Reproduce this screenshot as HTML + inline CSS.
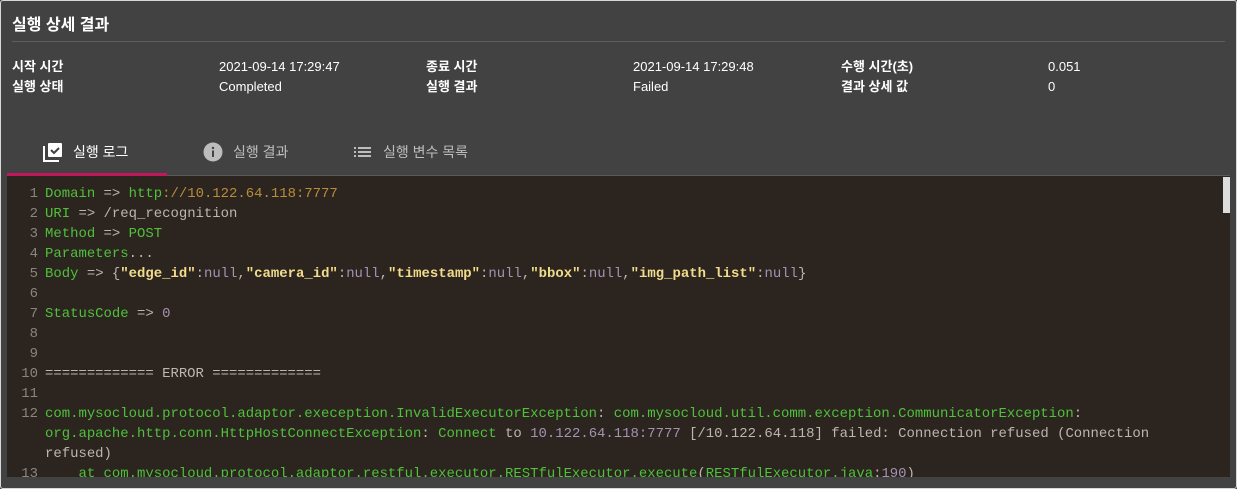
<!DOCTYPE html>
<html><head><meta charset="utf-8"><style>
*{margin:0;padding:0;box-sizing:border-box}
body{width:1237px;height:489px;background:#424242;font-family:"Liberation Sans","Noto Sans CJK KR",sans-serif;color:#fff;position:relative;overflow:hidden}
.frame{position:absolute;left:0;top:0;width:1237px;height:489px;border:1px solid #d8d8d8;border-radius:3px}
.title{position:absolute;left:12px;top:11px;font-size:16px;font-weight:bold}
.hr{position:absolute;left:12px;top:41px;width:1213px;height:1px;background:#5e5e5e}
.info{position:absolute;font-size:13px;white-space:nowrap;line-height:16px;height:16px}
.b{font-weight:bold}
.tab{position:absolute;top:141px;font-size:14px;color:#bdbdbd;display:flex;align-items:center}
.tab svg{margin-right:10px}
.ul{position:absolute;left:7px;top:173px;width:160px;height:3px;background:#c2185b}
.tl{position:absolute;left:167px;top:175px;width:1063px;height:1px;background:#5a5a5a}
.code{position:absolute;left:7px;top:176px;width:1216px;height:301px;background:#2b241f;overflow:hidden;font-family:"Liberation Mono",monospace;font-size:13.95px;}
.ln{position:absolute;left:0;width:31px;text-align:right;color:#8a8580}
.tx{position:absolute;left:38px;white-space:pre;color:#bdb6ad}
.g{color:#4fc13b}.o{color:#b98d3a}.y{color:#f2dc8b;font-weight:bold}.p{color:#a393b3}
.sb{position:absolute;left:1223px;top:176px;width:7px;height:301px;background:#2b241f}
.sbt{position:absolute;left:1223px;top:177px;width:7px;height:36px;background:#ddd}
</style></head><body>
<div class="frame"></div>
<div class="title">실행 상세 결과</div>
<div class="hr"></div>
<div class="info b" style="left:12px;top:59px">시작 시간</div>
<div class="info" style="left:219px;top:59px">2021-09-14 17:29:47</div>
<div class="info b" style="left:426px;top:59px">종료 시간</div>
<div class="info" style="left:633px;top:59px">2021-09-14 17:29:48</div>
<div class="info b" style="left:841px;top:59px">수행 시간(초)</div>
<div class="info" style="left:1048px;top:59px">0.051</div>
<div class="info b" style="left:12px;top:79px">실행 상태</div>
<div class="info" style="left:219px;top:79px">Completed</div>
<div class="info b" style="left:426px;top:79px">실행 결과</div>
<div class="info" style="left:633px;top:79px">Failed</div>
<div class="info b" style="left:841px;top:79px">결과 상세 값</div>
<div class="info" style="left:1048px;top:79px">0</div>

<div class="tab" style="left:43px;top:142px;color:#fff"><svg width="20" height="20" viewBox="0 0 20 20"><path d="M1 4v15h15" fill="none" stroke="#fff" stroke-width="2"/><rect x="5" y="1" width="14" height="14" rx="1" fill="#fff"/><path d="M8 8l3 3 5-5" fill="none" stroke="#424242" stroke-width="2"/></svg>실행 로그</div>
<div class="tab" style="left:203px;top:142px"><svg width="20" height="20" viewBox="0 0 20 20"><circle cx="10" cy="10" r="9.5" fill="#bdbdbd"/><rect x="9" y="8.5" width="2" height="6.5" fill="#424242"/><circle cx="10" cy="6" r="1.2" fill="#424242"/></svg>실행 결과</div>
<div class="tab" style="left:353px;top:142px"><svg width="20" height="20" viewBox="0 0 20 20"><g fill="#bdbdbd"><rect x="1" y="5" width="2" height="2"/><rect x="1" y="9" width="2" height="2"/><rect x="1" y="13" width="2" height="2"/><rect x="5" y="5" width="13" height="2"/><rect x="5" y="9" width="13" height="2"/><rect x="5" y="13" width="13" height="2"/></g></svg>실행 변수 목록</div>
<div class="ul"></div><div class="tl"></div>

<div class="code">
<div class="ln" style="top:10px">1</div><div class="tx" style="top:10px"><span class="g">Domain</span> =&gt; <span class="g">http</span><span class="o">://10.122.64.118:7777</span></div>
<div class="ln" style="top:30px">2</div><div class="tx" style="top:30px"><span class="g">URI</span> =&gt; /req_recognition</div>
<div class="ln" style="top:50px">3</div><div class="tx" style="top:50px"><span class="g">Method</span> =&gt; <span class="g">POST</span></div>
<div class="ln" style="top:70px">4</div><div class="tx" style="top:70px"><span class="g">Parameters</span>...</div>
<div class="ln" style="top:90px">5</div><div class="tx" style="top:90px"><span class="g">Body</span> =&gt; {<span class="y">"edge_id"</span>:<span class="p">null</span>,<span class="y">"camera_id"</span>:<span class="p">null</span>,<span class="y">"timestamp"</span>:<span class="p">null</span>,<span class="y">"bbox"</span>:<span class="p">null</span>,<span class="y">"img_path_list"</span>:<span class="p">null</span>}</div>
<div class="ln" style="top:110px">6</div>
<div class="ln" style="top:130px">7</div><div class="tx" style="top:130px"><span class="g">StatusCode</span> =&gt; <span class="p">0</span></div>
<div class="ln" style="top:150px">8</div>
<div class="ln" style="top:170px">9</div>
<div class="ln" style="top:190px">10</div><div class="tx" style="top:190px">============= ERROR =============</div>
<div class="ln" style="top:210px">11</div>
<div class="ln" style="top:230px">12</div><div class="tx" style="top:230px"><span class="g">com.mysocloud.protocol.adaptor.exeception.InvalidExecutorException</span>: <span class="g">com.mysocloud.util.comm.exception.CommunicatorException</span>:</div>
<div class="tx" style="top:250px"><span class="g">org.apache.http.conn.HttpHostConnectException</span>: <span class="g">Connect</span> to <span class="p">10.122.64.118:7777</span> [/10.122.64.118] failed: Connection refused (Connection</div>
<div class="tx" style="top:270px">refused)</div>
<div class="ln" style="top:290px">13</div><div class="tx" style="top:290px">    <span class="g">at com.mysocloud.protocol.adaptor.restful.executor.RESTfulExecutor.execute</span>(<span class="g">RESTfulExecutor.java</span>:<span class="p">190</span>)</div>
</div>
<div class="sb"></div><div class="sbt"></div>
</body></html>
